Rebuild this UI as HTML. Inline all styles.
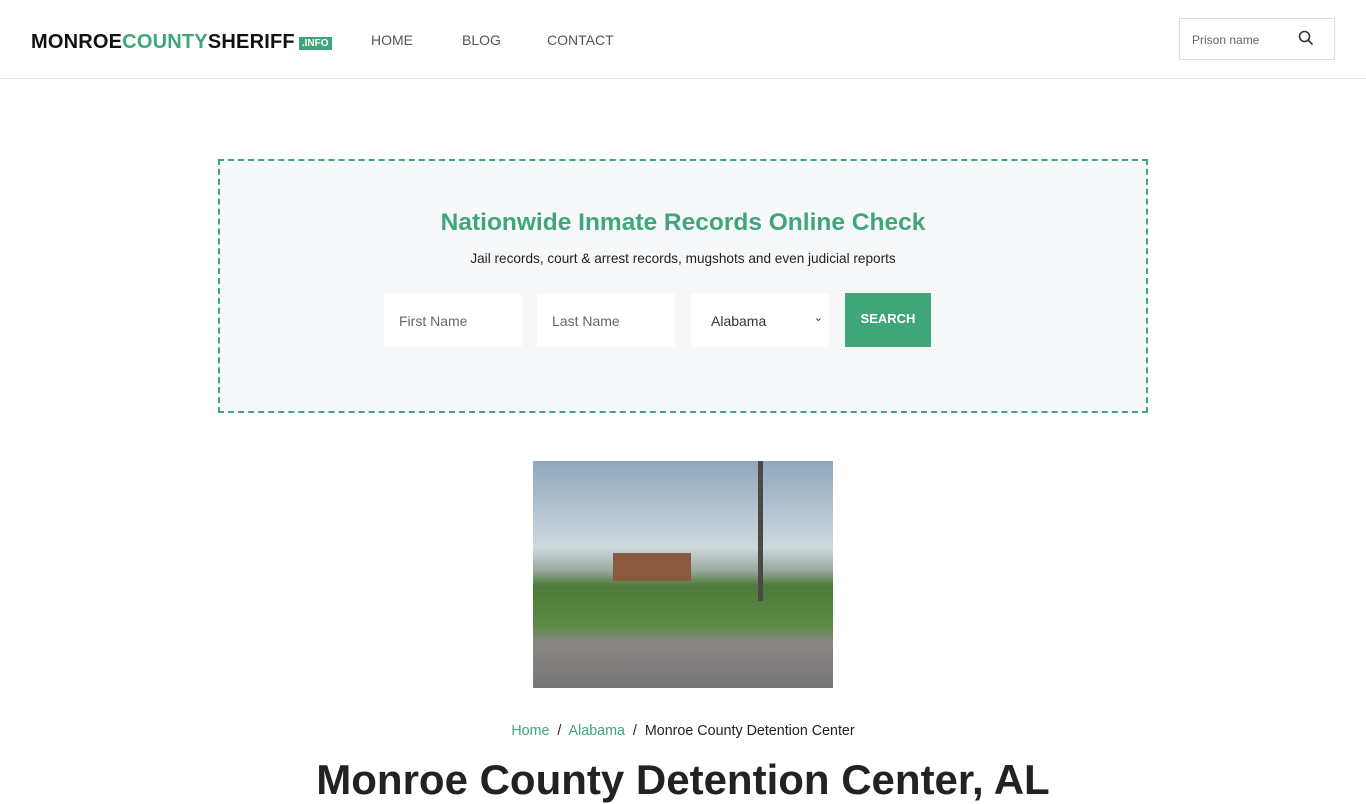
<!DOCTYPE html>
<html><head><meta charset="utf-8"><style>
*{margin:0;padding:0;box-sizing:border-box}
body{width:1366px;height:768px;overflow:hidden;background:#fff;font-family:"Liberation Sans",sans-serif;position:relative}
.hdr{position:absolute;left:0;top:0;width:1366px;height:79px;border-bottom:1px solid #e6e6e6}
.logo{position:absolute;left:31px;top:31px;font-weight:bold;font-size:20px;letter-spacing:0.2px;color:#111;white-space:nowrap}
.logo .g{color:#3fa67a}
.logo .b{background:#3fa67a;color:#fff;font-size:10px;padding:1px 3px;margin-left:4px;vertical-align:2px;letter-spacing:0}
.nav{position:absolute;top:32px;font-size:14px;color:#555}
.sbox{position:absolute;left:1179px;top:18px;width:156px;height:42px;border:1px solid #ddd;font-size:12px;color:#666;padding:14px 12px}
.box{position:absolute;left:218px;top:159px;width:930px;height:254px;border:2px dashed #3fa67a;background:#f6f8f9}
h2{position:absolute;top:209px;width:1366px;text-align:center;color:#3fa67a;font-size:24.5px;font-weight:bold;left:0}
.sub{position:absolute;top:251px;width:1366px;text-align:center;font-size:13.6px;color:#222;left:0}
.in{position:absolute;top:294px;width:138px;height:53px;background:#fff;font-size:14px;color:#666;padding:19px 15px}
.btn{position:absolute;left:845px;top:293px;width:86px;height:54px;background:#3fa67a;color:#fff;font-size:13px;font-weight:bold;text-align:center;line-height:52px}
.img{position:absolute;left:533px;top:461px;width:300px;height:227px;background:linear-gradient(#8fa7bd 0,#cfd8df 38%,#9aa9a0 48%,#4e7a3a 55%,#5b8a44 72%,#8a8784 80%,#777 100%)}
.bc{position:absolute;top:723px;width:1366px;text-align:center;font-size:14.3px;color:#222;left:0}
.bc a{color:#3fa67a;text-decoration:none}
.h1{position:absolute;top:756px;left:0;width:1366px;text-align:center;font-size:42px;font-weight:bold;color:#222}
</style></head><body>
<div class="hdr">
<div class="logo">MONROE<span class="g">COUNTY</span>SHERIFF<span class="b">.INFO</span></div>
<div class="nav" style="left:371px">HOME</div>
<div class="nav" style="left:462px">BLOG</div>
<div class="nav" style="left:547px">CONTACT</div>
<div class="sbox">Prison name
<svg style="position:absolute;right:20px;top:11px" width="16" height="16" viewBox="0 0 16 16"><circle cx="6.5" cy="6.5" r="5" fill="none" stroke="#333" stroke-width="1.6"/><path d="M10 10l4.5 4.5" stroke="#333" stroke-width="1.6"/></svg></div>
</div>
<div class="box"></div>
<h2>Nationwide Inmate Records Online Check</h2>
<div class="sub">Jail records, court &amp; arrest records, mugshots and even judicial reports</div>
<div class="in" style="left:384px">First Name</div>
<div class="in" style="left:537px">Last Name</div>
<div class="in" style="left:691px;color:#333;padding-left:20px">Alabama<span style="position:absolute;right:6px;top:17px;font-size:11px">&#8964;</span></div>
<div class="btn">SEARCH</div>
<div class="img"><div style="position:absolute;left:80px;top:92px;width:78px;height:28px;background:#8a5a3e"></div><div style="position:absolute;left:225px;top:0;width:5px;height:140px;background:#4a4a42"></div></div>
<div class="bc"><a>Home</a> &nbsp;/&nbsp; <a>Alabama</a> &nbsp;/&nbsp; Monroe County Detention Center</div>
<div class="h1">Monroe County Detention Center, AL</div>
</body></html>
